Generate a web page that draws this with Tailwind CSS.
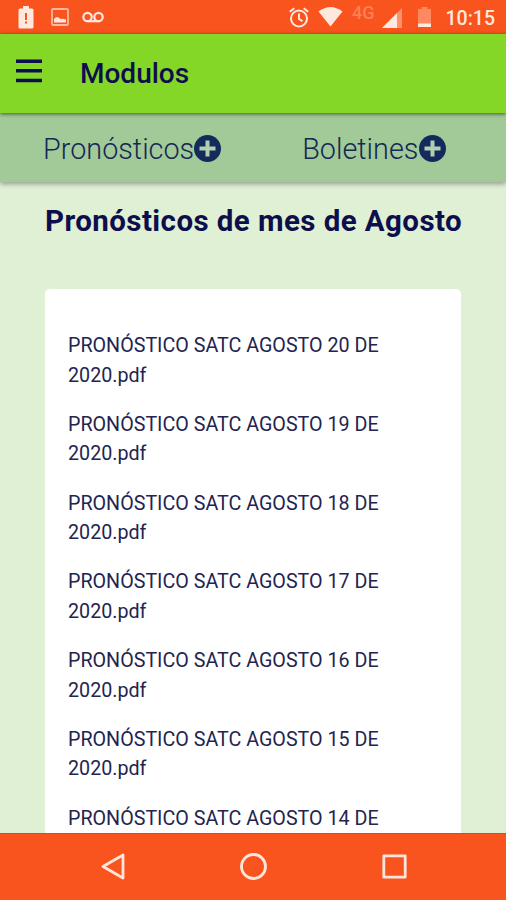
<!DOCTYPE html>
<html lang="es">
  <head>
    <meta charset="UTF-8" />
    <meta name="viewport" content="width=device-width, initial-scale=1.0" />
    <title>Modulos</title>
    <script src="https://cdn.jsdelivr.net/npm/@tailwindcss/browser@4"></script>
  </head>
  <body class="h-[900px] flex flex-col overflow-hidden bg-[#e0f0d5] font-['Roboto',sans-serif] text-[#0d0f4c]">
    <!-- Status bar -->
    <div class="h-[34px] shrink-0 flex items-center justify-between bg-[#f9531e] text-[#ffe9df] pl-[18px] pr-[11px]">
      <div class="flex items-center">
        <svg class="w-4 h-[23px]" viewBox="0 0 16 23" fill="currentColor">
          <path d="M5 0h6v2.500h3q1.500 0 1.500 1.500v17q0 1.500-1.500 1.500H2Q.5 22.500.5 21V4Q.5 2.500 2 2.500h3z" />
          <path d="M7 7h2v7H7zM7 15.500h2v2H7z" fill="#f9531e" />
        </svg>
        <svg class="w-[18px] h-[18px] ml-[17px]" viewBox="0 0 18 18">
          <rect x="1" y="1" width="16" height="16" rx="1" fill="none" stroke="#ffb79d" stroke-width="1.800" />
          <path d="M3 14.500V11q2.500-3 4.500-1.500l2 1.500q2.500-.5 5.500.5v3z" fill="currentColor" />
        </svg>
        <svg class="w-[22px] h-3 ml-[13px]" viewBox="0 0 22 12" fill="none" stroke="currentColor" stroke-width="2.200">
          <circle cx="5.500" cy="6" r="4.200" />
          <circle cx="16.500" cy="6" r="4.200" />
          <path d="M5.500 10.200h11" />
        </svg>
      </div>
      <div class="flex items-center">
        <svg class="w-5 h-[21px]" viewBox="0 0 20 21" fill="none" stroke="currentColor" stroke-width="2">
          <circle cx="10" cy="11.500" r="8" />
          <path d="M10 6.500v5.500l3.500 2.200M.8 4.800l4.500-3.600M19.200 4.800l-4.500-3.600" />
        </svg>
        <svg class="w-[25px] h-5 ml-[9px]" viewBox="0 0 25 20" fill="currentColor">
          <path d="M.5 4.500Q12.500-4.500 24.500 4.500L12.500 19.500z" />
        </svg>
        <span class="ml-[9px] mb-[8px] text-[18px] leading-none font-medium text-[#ff8055]">4G</span>
        <svg class="w-5 h-5 ml-[7px] mt-[2px]" viewBox="0 0 20 20">
          <path d="M0 20L20 0v20z" fill="#fc916c" />
          <path d="M0 20L15 5v15z" fill="currentColor" />
        </svg>
        <svg class="w-[15px] h-5 ml-[15px]" viewBox="0 0 15 20">
          <path d="M4.500 0h6v2H14v18H1V2h3.500z" fill="#fc8961" />
          <path d="M1 16.500h13V20H1z" fill="currentColor" />
        </svg>
        <span class="ml-[14px] mt-[3px] text-[19.500px] leading-none font-medium">10:15</span>
      </div>
    </div>

    <!-- Toolbar -->
    <header class="h-[79px] shrink-0 relative z-20 flex items-center bg-[#84d727] pl-4 shadow-[0_1px_4px_rgba(0,0,0,0.6)]">
      <svg class="w-[26px] h-6 mb-[5px]" viewBox="0 0 26 24" fill="currentColor">
        <path d="M0 .5h26V4H0zM0 10h26v3.500H0zM0 19.800h26v3.500H0z" />
      </svg>
      <h1 class="ml-[38px] text-[28px] leading-none font-medium">Modulos</h1>
    </header>

    <!-- Tabs -->
    <nav class="h-[69px] shrink-0 relative z-10 flex items-center bg-[#a2ca99] pl-[43px] pt-[3px] text-[28.800px] font-light text-[#152853] shadow-[0_2px_5px_rgba(0,0,0,0.35)]">
      <button class="flex items-center leading-none">
        <span>Pronósticos</span>
        <svg class="w-[27px] h-[27px]" viewBox="0 0 27 27">
          <circle cx="13.500" cy="13.500" r="13.500" fill="#142a5c" />
          <path d="M13.500 5.500v16M5.500 13.500h16" stroke="#b0d0b0" stroke-width="4" />
        </svg>
      </button>
      <button class="flex items-center leading-none ml-[81px]">
        <span>Boletines</span>
        <svg class="w-[27px] h-[27px] ml-px" viewBox="0 0 27 27">
          <circle cx="13.500" cy="13.500" r="13.500" fill="#142a5c" />
          <path d="M13.500 5.500v16M5.500 13.500h16" stroke="#b0d0b0" stroke-width="4" />
        </svg>
      </button>
    </nav>

    <!-- Forecast list -->
    <main class="flex-1 min-h-0 overflow-hidden px-[45px] pt-[22px]">
      <h2 class="text-[29.500px] leading-[35px] tracking-[0.430px] font-bold whitespace-nowrap">Pronósticos de mes de Agosto</h2>
      <div class="mt-[50px] h-[600px] rounded-[5px] bg-white px-[23px] pt-[42px] text-[19.690px] leading-[29.530px] text-[#24244f]">
        <p class="mb-[19.690px]">PRONÓSTICO SATC AGOSTO 20 DE<br />2020.pdf</p>
        <p class="mb-[19.690px]">PRONÓSTICO SATC AGOSTO 19 DE<br />2020.pdf</p>
        <p class="mb-[19.690px]">PRONÓSTICO SATC AGOSTO 18 DE<br />2020.pdf</p>
        <p class="mb-[19.690px]">PRONÓSTICO SATC AGOSTO 17 DE<br />2020.pdf</p>
        <p class="mb-[19.690px]">PRONÓSTICO SATC AGOSTO 16 DE<br />2020.pdf</p>
        <p class="mb-[19.690px]">PRONÓSTICO SATC AGOSTO 15 DE<br />2020.pdf</p>
        <p>PRONÓSTICO SATC AGOSTO 14 DE</p>
      </div>
    </main>

    <!-- Android navigation -->
    <div class="h-[67px] shrink-0 flex items-center border-t border-[#e04812] bg-[#f9531e] pl-[101px] pb-[1px] text-[#ffe6dc]">
      <svg class="w-6 h-[27px]" viewBox="0 0 24 27" fill="none" stroke="currentColor" stroke-width="2.800" stroke-linejoin="round">
        <path d="M22 2v23L2 13.500z" />
      </svg>
      <svg class="w-[27px] h-[27px] ml-[115px]" viewBox="0 0 27 27" fill="none" stroke="currentColor" stroke-width="2.800">
        <circle cx="13.500" cy="13.500" r="12" />
      </svg>
      <svg class="w-[25px] h-[25px] ml-[115px]" viewBox="0 0 25 25" fill="none" stroke="currentColor" stroke-width="2.800" stroke-linejoin="round">
        <rect x="1.800" y="1.800" width="21.400" height="21.400" />
      </svg>
    </div>
  </body>
</html>
